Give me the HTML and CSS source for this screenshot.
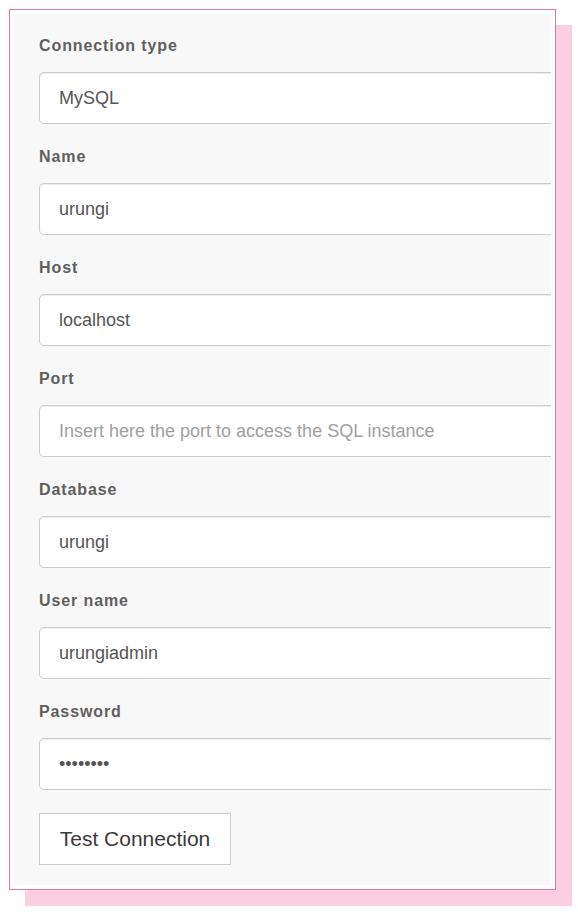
FILE: index.html
```html
<!DOCTYPE html>
<html>
<head>
<meta charset="utf-8">
<link rel="stylesheet" href="styles.css">
</head>
<body>
<div class="frame">
  <form class="panel">
    <label class="label">Connection type</label>
    <input class="field" type="text" value="MySQL">
    <label class="label">Name</label>
    <input class="field" type="text" value="urungi">
    <label class="label">Host</label>
    <input class="field" type="text" value="localhost">
    <label class="label">Port</label>
    <input class="field" type="text" placeholder="Insert here the port to access the SQL instance">
    <label class="label">Database</label>
    <input class="field" type="text" value="urungi">
    <label class="label">User name</label>
    <input class="field" type="text" value="urungiadmin">
    <label class="label">Password</label>
    <input class="field" type="password" value="password">
    <button class="btn" type="button">Test Connection</button>
  </form>
</div>
</body>
</html>
```

FILE: styles.css
```css
html, body {
  margin: 0;
  padding: 0;
  background: #ffffff;
}

body {
  font-family: "Liberation Sans", Arial, sans-serif;
  padding: 9px 0 25px 9px;
}

.frame {
  box-sizing: border-box;
  width: 547px;
  border: 1px solid #de7ba0;
  padding: 4px;
  background: #ffffff;
  box-shadow: 16px 16px 0 #fdcde1;
}

.panel {
  display: flex;
  flex-direction: column;
  align-items: flex-start;
  background: #f8f8f8;
  overflow: hidden;
  margin: 0;
  padding: 22px 0 20px 25px;
}

.label {
  display: block;
  font-size: 16px;
  font-weight: bold;
  line-height: 20px;
  letter-spacing: 0.9px;
  color: #5f5f5f;
  margin-bottom: 16px;
}

.field {
  box-sizing: border-box;
  width: 560px;
  height: 52px;
  margin: 0 0 23px 0;
  padding: 0 19px;
  border: 1px solid #cccccc;
  border-radius: 5px;
  background: #ffffff;
  box-shadow: inset 0 1px 1px rgba(0, 0, 0, 0.075);
  font-family: "Liberation Sans", Arial, sans-serif;
  font-size: 18px;
  color: #555555;
  outline: none;
}

.field::placeholder {
  color: #a0a0a0;
  opacity: 1;
}

.btn {
  box-sizing: border-box;
  width: 192px;
  height: 52px;
  margin: 0;
  padding: 0;
  border: 1px solid #cccccc;
  border-radius: 0;
  background: #ffffff;
  font-family: "Liberation Sans", Arial, sans-serif;
  font-size: 21px;
  color: #3a3a3a;
}
```
